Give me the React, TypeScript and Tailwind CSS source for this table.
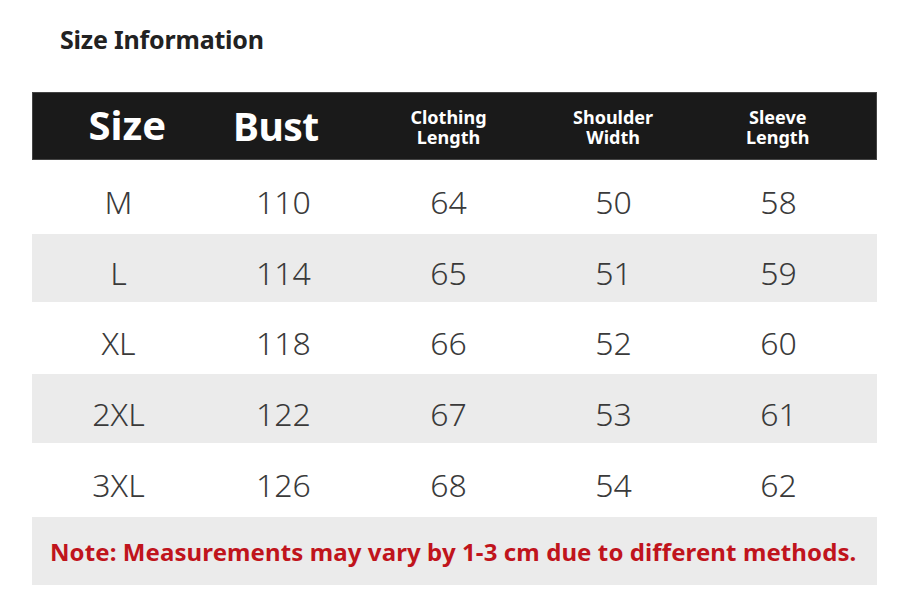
import React from "react";

const rows = [
  { s: "M", v: ["110", "64", "50", "58"], h: "h-[74px]", bg: "bg-white" },
  { s: "L", v: ["114", "65", "51", "59"], h: "h-[68px]", bg: "bg-[#ebebeb]" },
  { s: "XL", v: ["118", "66", "52", "60"], h: "h-[72px]", bg: "bg-white" },
  { s: "2XL", v: ["122", "67", "53", "61"], h: "h-[69px]", bg: "bg-[#ebebeb]" },
  { s: "3XL", v: ["126", "68", "54", "62"], h: "h-[74px]", bg: "bg-white" },
];

export default function App() {
  return (
    <div className="w-[902px] h-[602px] bg-white pt-[25px]" style={{ fontFamily: '"Noto Sans", "Open Sans", sans-serif' }}>
      <div className="ml-[32px] w-[845px]">
        <div className="ml-[28px] h-[30px] flex items-center text-[25px] font-bold text-[#222] tracking-[-0.2px]">Size Information</div>
        <div className="mt-[37px] h-[68px] bg-[#1a1a1a] border border-[#444] grid grid-cols-5 items-center pl-[4px] pr-[16px] text-white font-bold">
          <div className="text-center text-[40px] leading-none pl-[16px] pb-[2px]">Size</div>
          <div className="text-center text-[39px] leading-none pr-[16px] pb-[2px] tracking-[-0.5px]">Bust</div>
          <div className="text-center text-[18px] leading-[20px] pt-[2px]">Clothing<br />Length</div>
          <div className="text-center text-[18px] leading-[20px] pt-[2px]">Shoulder<br />Width</div>
          <div className="text-center text-[18px] leading-[20px] pt-[2px]">Sleeve<br />Length</div>
        </div>
        {rows.map((r) => (
          <div key={r.s} className={`${r.h} ${r.bg} grid grid-cols-5 items-center pt-[10px] pl-[4px] pr-[16px] text-[32px] font-light text-[#3a3a3a]`}>
            <div className="text-center">{r.s}</div>
            {r.v.map((x, i) => (
              <div key={i} className="text-center">{x}</div>
            ))}
          </div>
        ))}
        <div className="h-[68px] bg-[#ebebeb] flex items-center pl-[18px] pt-[2px] text-[24px] font-bold text-[#c0141c] tracking-[0.1px]">
          Note: Measurements may vary by 1-3 cm due to different methods.
        </div>
      </div>
    </div>
  );
}
